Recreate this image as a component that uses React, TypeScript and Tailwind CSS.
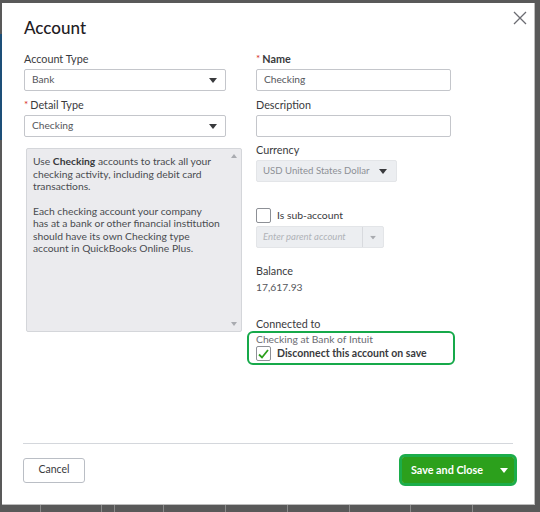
import React from "react";

const font = { fontFamily: "Lato, 'Open Sans', sans-serif" };

function Caret({ className = "" }: { className?: string }) {
  return (
    <svg width="8" height="5" viewBox="0 0 8 5" className={className}>
      <path d="M0 0h8L4 5z" fill="currentColor" />
    </svg>
  );
}

function Label({ children, required }: { children: React.ReactNode; required?: boolean }) {
  return (
    <div className="h-[16px] mb-[2px] text-[10.8px] leading-[16px] text-[#393a3d] flex items-center">
      {required && <span className="text-[#d52b1e] text-[10px] mr-[2px] -mt-[2px]">*</span>}
      {children}
    </div>
  );
}

function Select({ value, width }: { value: string; width: string }) {
  return (
    <div
      className={`${width} h-[22px] border border-[#c4c6cb] rounded-[2px] flex items-center justify-between pl-[7px] pr-[8px] text-[10.2px] text-[#55565b] bg-white`}
    >
      <span>{value}</span>
      <Caret className="text-[#393a3d]" />
    </div>
  );
}

export default function App() {
  return (
    <div className="relative w-[540px] h-[512px] bg-[#595959] overflow-hidden" style={font}>
      {/* page behind the dialog */}
      <div className="absolute left-0 top-[34px] w-[2px] h-[106px] bg-[#1d4f78]" />
      <div className="absolute left-0 right-0 bottom-0 h-[7px]">
        {[40, 101, 114, 163, 225, 287, 349, 410, 472].map((x) => (
          <div key={x} className="absolute top-0 bottom-0 w-px bg-[#8a8a8a]" style={{ left: x }} />
        ))}
      </div>

      <div className="ml-[2px] pt-[3px]">
        <div className="w-[533px] h-[502px] bg-white border-r border-b border-[#bdbdbd] flex flex-col">
          {/* header */}
          <div className="flex items-start justify-between pl-[22px] pr-[7px] pt-[13px]">
            <h1 className="text-[17px] leading-[24px] font-medium text-[#1f2023]">Account</h1>
            <svg width="14" height="14" viewBox="0 0 14 14" className="-mt-[5px] text-[#6b6c72]">
              <path d="M1 1l12 12M13 1L1 13" stroke="currentColor" strokeWidth="1.3" />
            </svg>
          </div>

          {/* form */}
          <div className="flex pl-[22px] pt-[11px]">
            <div className="w-[232px] flex flex-col">
              <Label>Account Type</Label>
              <Select value="Bank" width="w-[202px]" />
              <div className="h-[6px]" />
              <Label required>Detail Type</Label>
              <Select value="Checking" width="w-[202px]" />
              <div className="mt-[11px] ml-[2px] w-[216px] h-[184px] bg-[#ebebee] border border-[#d4d6da] rounded-[2px] relative pl-[6px] pt-[6px] pr-[12px] text-[10.3px] leading-[12.5px] text-[#4a4b50]">
                <p>
                  Use <b className="font-bold text-[#393a3d]">Checking</b> accounts to track all your
                  <br />
                  checking activity, including debit card
                  <br />
                  transactions.
                </p>
                <p className="mt-[12px]">
                  Each checking account your company
                  <br />
                  has at a bank or other financial institution
                  <br />
                  should have its own Checking type
                  <br />
                  account in QuickBooks Online Plus.
                </p>
                <svg width="6" height="4" viewBox="0 0 6 4" className="absolute right-[4px] top-[5px] text-[#a9abb0]">
                  <path d="M0 4h6L3 0z" fill="currentColor" />
                </svg>
                <svg width="6" height="4" viewBox="0 0 6 4" className="absolute right-[4px] bottom-[5px] text-[#a9abb0]">
                  <path d="M0 0h6L3 4z" fill="currentColor" />
                </svg>
              </div>
            </div>

            <div className="w-[240px] flex flex-col">
              <Label required>
                <span className="font-bold">Name</span>
              </Label>
              <div className="w-[195px] h-[22px] border border-[#c4c6cb] rounded-[2px] flex items-center pl-[7px] text-[10.2px] text-[#55565b]">
                Checking
              </div>
              <div className="h-[6px]" />
              <Label>Description</Label>
              <div className="w-[195px] h-[22px] border border-[#c4c6cb] rounded-[2px]" />
              <div className="h-[5px]" />
              <Label>Currency</Label>
              <div className="w-[141px] h-[22px] bg-[#eceef1] border border-[#e3e5e8] rounded-[2px] flex items-center justify-between pl-[6px] pr-[9px] text-[9.6px] text-[#8d9096]">
                <span>USD United States Dollar</span>
                <Caret className="text-[#393a3d]" />
              </div>

              <div className="mt-[26px] flex items-center gap-[6px] h-[15px]">
                <div className="w-[15px] h-[15px] border border-[#8d9096] rounded-[2px] bg-white" />
                <span className="text-[10.4px] text-[#393a3d]">Is sub-account</span>
              </div>
              <div className="mt-[3px] w-[128px] h-[22px] bg-[#eceef1] border border-[#e3e5e8] rounded-[2px] flex items-center text-[9.5px] italic text-[#b0b3b8]">
                <span className="flex-1 pl-[6px]">Enter parent account</span>
                <div className="w-[21px] h-full border-l border-[#d8dade] flex items-center justify-center">
                  <Caret className="text-[#a9abb0] scale-75" />
                </div>
              </div>

              <div className="mt-[15px] text-[10.8px] leading-[16px] text-[#393a3d]">Balance</div>
              <div className="text-[10.3px] leading-[16px] text-[#55565b]">17,617.93</div>

              <div className="mt-[21px] text-[10.8px] leading-[16px] text-[#393a3d]">Connected to</div>
              <div className="-ml-[9px] -mt-[1px] w-[208px] h-[34px] border-2 border-[#16a94a] rounded-[6px] pl-[7px] flex flex-col">
                <div className="text-[10.3px] leading-[12px] text-[#6b6c72]">Checking at Bank of Intuit</div>
                <div className="flex items-center gap-[6px] mt-[1px]">
                  <div className="w-[15px] h-[15px] border border-[#8d9096] rounded-[2px] bg-white flex items-center justify-center">
                    <svg width="11" height="10" viewBox="0 0 11 10">
                      <path d="M1 5.5l3 3L10 1" stroke="#2ca01c" strokeWidth="1.8" fill="none" />
                    </svg>
                  </div>
                  <span className="text-[10.5px] font-bold text-[#393a3d]">Disconnect this account on save</span>
                </div>
              </div>
            </div>
          </div>

          {/* footer */}
          <div className="mt-auto mx-[21px] border-t border-[#d4d7dc]" />
          <div className="flex items-center justify-between pl-[21px] pr-[17px] pt-[10px] pb-[18px]">
            <button className="w-[62px] h-[25px] border border-[#babec5] rounded-[3px] text-[10.5px] text-[#393a3d] bg-white">
              Cancel
            </button>
            <div className="border-[3px] border-[#1cad4b] rounded-[6px]">
              <div className="w-[112px] h-[26px] bg-[#2ca01c] rounded-[2px] flex items-center text-white">
                <span className="flex-1 pl-[9px] text-[10.8px] font-bold">Save and Close</span>
                <div className="w-[20px] flex items-center justify-center">
                  <Caret className="text-white" />
                </div>
              </div>
            </div>
          </div>
        </div>
      </div>
    </div>
  );
}
